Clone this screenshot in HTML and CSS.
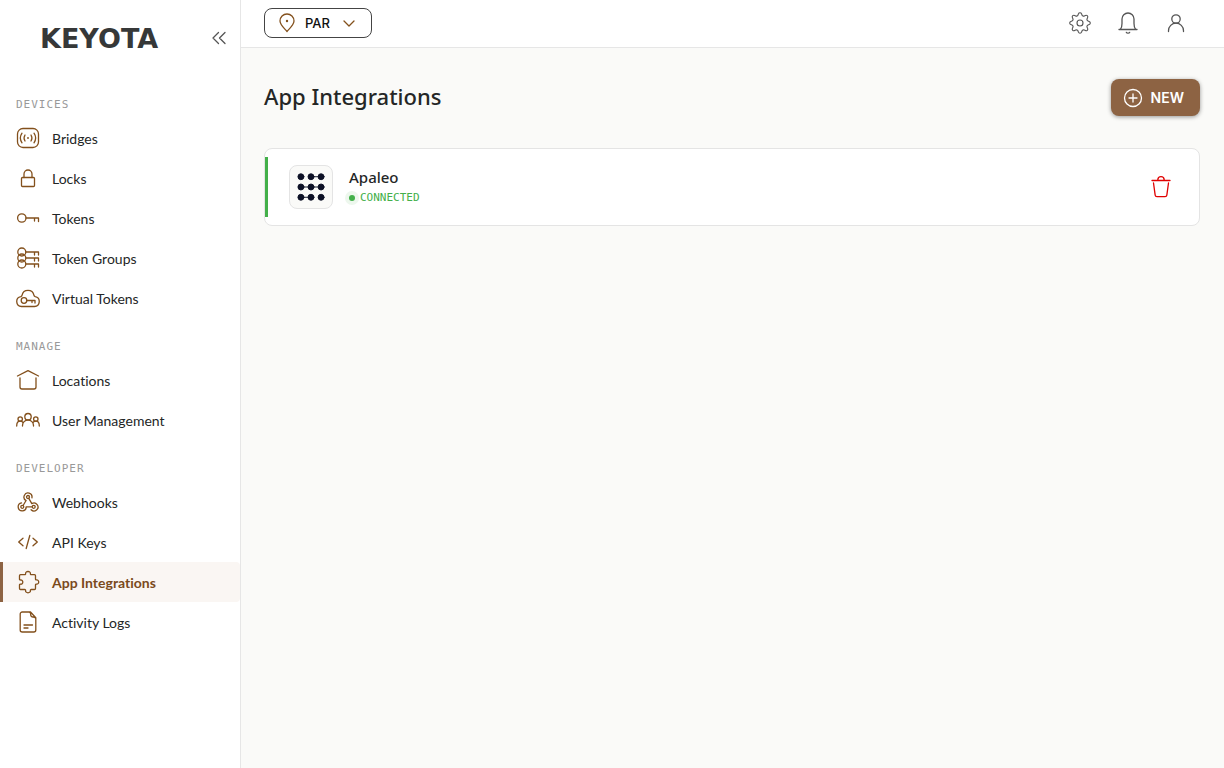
FILE: index.html
```html
<!DOCTYPE html>
<html lang="en">
<head>
  <meta charset="UTF-8">
  <meta name="viewport" content="width=device-width, initial-scale=1.0">
  <title>App Integrations - Keyota</title>
  <link rel="stylesheet" href="styles.css">
</head>
<body>
  <aside class="sidebar">
    <div class="sidebar-head">
      <a class="logo" href="#">KEYOTA</a>
      <button class="icon-btn collapse" aria-label="Collapse menu">
        <svg class="icon-sm" viewBox="0 0 16 16"><path d="M7.5 2.500 2 8l5.500 5.500M14 2.500 8.500 8l5.500 5.500"/></svg>
      </button>
    </div>

    <nav>
      <h2 class="nav-label">DEVICES</h2>
      <a class="nav-item" href="#">
        <svg class="icon" viewBox="0 0 24 24"><rect x="1.500" y="2.500" width="21" height="19" rx="5.500"/><path d="M6 7.200c-2 2.900-2 6.700 0 9.600M9 9c-1.200 1.900-1.200 4.100 0 6M18 7.200c2 2.900 2 6.700 0 9.600M15 9c1.200 1.900 1.200 4.100 0 6"/><circle class="dot" cx="12" cy="12" r=".9"/></svg>
        Bridges
      </a>
      <a class="nav-item" href="#">
        <svg class="icon" viewBox="0 0 24 24"><rect x="5.500" y="11.500" width="13" height="9" rx="1"/><path d="M8 11.500V8a4 4 0 0 1 8 0v3.500"/></svg>
        Locks
      </a>
      <a class="nav-item" href="#">
        <svg class="icon" viewBox="0 0 24 24"><circle cx="5.800" cy="12" r="4.200"/><path d="M10 12h12.500v3.500M18.500 12v3"/></svg>
        Tokens
      </a>
      <a class="nav-item" href="#">
        <svg class="icon" viewBox="0 0 24 24"><circle cx="5.800" cy="6" r="4"/><circle cx="5.800" cy="12" r="4"/><circle cx="5.800" cy="18" r="4"/><path d="M10 6h12.500v3M18.500 6v3M10 12h12.500v3M18.500 12v3M10 18h12.500v3M18.500 18v3"/></svg>
        Token Groups
      </a>
      <a class="nav-item" href="#">
        <svg class="icon" viewBox="0 0 24 24"><path d="M5.500 20.500a5 5 0 0 1-.7-9.900c.7-.2 1.200-.7 1.300-1.400a6 6 0 0 1 11.800 0c.1.700.6 1.200 1.300 1.400a5 5 0 0 1-.7 9.900z"/><circle cx="8" cy="14.500" r="2.800"/><path d="M10.800 14.500h8.200v2.500M16 14.500v2"/></svg>
        Virtual Tokens
      </a>

      <h2 class="nav-label">MANAGE</h2>
      <a class="nav-item" href="#">
        <svg class="icon" viewBox="0 0 24 24"><path d="M1.500 8 12 2.700 22.500 8M4 10v9c0 1.200.8 2 2 2h12c1.200 0 2-.8 2-2v-9"/></svg>
        Locations
      </a>
      <a class="nav-item" href="#">
        <svg class="icon" viewBox="0 0 24 24"><circle cx="12" cy="8.700" r="3.200"/><path d="M6.500 18v-.5a5.500 5.500 0 0 1 11 0v.5"/><circle cx="4.200" cy="11" r="2.200"/><circle cx="19.800" cy="11" r="2.200"/><path d="M.7 18c0-2.800 1-4.800 3.500-4.800 1.100 0 2 .4 2.600 1M23.300 18c0-2.800-1-4.800-3.500-4.800-1.100 0-2 .4-2.600 1"/></svg>
        User Management
      </a>

      <h2 class="nav-label">DEVELOPER</h2>
      <a class="nav-item" href="#">
        <svg class="icon" viewBox="0 0 24 24"><circle cx="12" cy="7" r="1.500"/><circle cx="6.300" cy="16.800" r="1.500"/><circle cx="17.700" cy="16.800" r="1.500"/><path d="M15.900 7.800a4 4 0 1 0-5.800 2.700l-3 5M12.800 8.400l3 5.200a4 4 0 1 1-.7 6.200M16 16.800h-5.800a4 4 0 1 1-4.700-3.900"/></svg>
        Webhooks
      </a>
      <a class="nav-item" href="#">
        <svg class="icon" viewBox="0 0 24 24"><path d="M7 8.200 2.700 12 7 15.800M17 8.200l4.300 3.800-4.300 3.800M13.800 5.500l-3.600 13"/></svg>
        API Keys
      </a>
      <a class="nav-item active" href="#" aria-current="page">
        <svg class="icon" viewBox="0 0 24 24"><path d="M4.500 4.700h4.200c.7 0 1-.5.900-1.100C9.400 2.500 10.400 1.500 12 1.500s2.600 1 2.400 2.100c-.1.600.2 1.100.9 1.100h3.200c.6 0 1 .4 1 1v3.200c0 .7.400 1.100 1 1 1.200-.2 2.200.7 2.200 2.100s-1 2.300-2.200 2.100c-.6-.1-1 .3-1 1v3.400c0 .6-.4 1-1 1h-3.200c-.7 0-1 .5-.9 1.100.2 1.200-.8 2.200-2.400 2.200s-2.600-1-2.400-2.200c.1-.6-.2-1.100-.9-1.100H4.500c-.6 0-1-.4-1-1v-3.600c0-.6.4-.8 1-.7 1.300.2 2.300-.8 2.300-2.100s-1-2.300-2.300-2.100c-.6.100-1-.2-1-.8V5.700c0-.6.400-1 1-1z"/></svg>
        App Integrations
      </a>
      <a class="nav-item" href="#">
        <svg class="icon" viewBox="0 0 24 24"><path d="M6 2h8.500l5.300 5.800V20a2 2 0 0 1-2 2H6.200a2 2 0 0 1-2-2V4a2 2 0 0 1 2-2zM13.300 2.200c1.300.4 1.400 1.300 1.400 2.300 0 1.800.8 2.500 2.300 2.500 1.300 0 2.400.3 2.800 1.500M8 15h8.500M8 18h4"/></svg>
        Activity Logs
      </a>
    </nav>
  </aside>

  <div class="page">
    <header class="topbar">
      <div class="location">
        <svg class="icon pin" viewBox="0 0 24 24"><path d="M12 20.500C9.500 17.600 5 13.700 5 10a7 7 0 0 1 14 0c0 3.700-4.500 7.600-7 10.500z"/><circle class="dot" cx="12" cy="10" r="1.200"/></svg>
        <select class="location-select" aria-label="Location">
          <option>PAR</option>
        </select>
        <svg class="icon-sm chevron" viewBox="0 0 16 16"><path d="m3 6 5 5 5-5"/></svg>
      </div>
      <div class="topbar-actions">
        <button class="icon-btn" aria-label="Settings">
          <svg class="icon" viewBox="-2 -2 28 28"><g transform="rotate(22.5 12 12)"><path d="M10.546 2.438a1.957 1.957 0 0 0 2.908 0L14.400 1.400a1.959 1.959 0 0 1 3.410 1.413l-.071 1.400a1.958 1.958 0 0 0 2.051 2.053l1.400-.071A1.959 1.959 0 0 1 22.600 9.600l-1.040.942a1.959 1.959 0 0 0 0 2.909l1.040.942a1.959 1.959 0 0 1-1.413 3.410l-1.400-.071a1.958 1.958 0 0 0-2.056 2.056l.071 1.400A1.959 1.959 0 0 1 14.400 22.600l-.941-1.041a1.959 1.959 0 0 0-2.908 0L9.606 22.600A1.959 1.959 0 0 1 6.200 21.192l.072-1.400a1.958 1.958 0 0 0-2.056-2.056l-1.400.071A1.958 1.958 0 0 1 1.400 14.400l1.041-.942a1.959 1.959 0 0 0 0-2.909L1.400 9.600A1.958 1.958 0 0 1 2.812 6.200l1.400.071a1.958 1.958 0 0 0 2.055-2.060l-.072-1.400A1.959 1.959 0 0 1 9.606 1.400z"/></g><circle cx="12" cy="12" r="3.500"/></svg>
        </button>
        <button class="icon-btn" aria-label="Notifications">
          <svg class="icon" viewBox="0 0 24 24"><path d="M3 18.500h18M4.300 18.500c1.400-1.500 1.700-3.500 1.700-6V8a6 6 0 0 1 12 0v4.500c0 2.500.3 4.500 1.700 6M10.300 21.300c.5 1.200 2.900 1.200 3.400 0"/></svg>
        </button>
        <button class="icon-btn" aria-label="Account">
          <svg class="icon" viewBox="0 0 24 24"><circle cx="12" cy="8" r="4.200"/><path d="M4.500 20.500v-.8a7.500 7.500 0 0 1 15 0v.8"/></svg>
        </button>
      </div>
    </header>

    <main class="content">
      <div class="title-row">
        <h1>App Integrations</h1>
        <button class="new-btn">
          <svg class="icon" viewBox="0 0 24 24"><circle cx="12" cy="12" r="8.500"/><path d="M12 8v8M8 12h8"/></svg>
          NEW
        </button>
      </div>

      <div class="card">
        <div class="app-logo">
          <svg class="apaleo" viewBox="0 0 30 30">
            <path d="M15 4h10.800M4.200 15h21.600M4.200 26H15"/>
            <circle cx="4.200" cy="4" r="3.200"/><circle cx="15" cy="4" r="3.200"/><circle cx="25.800" cy="4" r="3.200"/>
            <circle cx="4.200" cy="15" r="3.200"/><circle cx="15" cy="15" r="3.200"/><circle cx="25.800" cy="15" r="3.200"/>
            <circle cx="4.200" cy="26" r="3.200"/><circle cx="15" cy="26" r="3.200"/><circle cx="25.800" cy="26" r="3.200"/>
          </svg>
        </div>
        <div class="app-info">
          <h3>Apaleo</h3>
          <div class="status">CONNECTED</div>
        </div>
        <button class="icon-btn delete" aria-label="Delete integration">
          <svg class="icon" viewBox="0 0 24 24"><path d="M3 5.500h18M8.800 5.500v-.8A3.200 3.200 0 0 1 12 1.700a3.200 3.200 0 0 1 3.200 3v.8M4.500 8l1.700 12.300c.1.900.8 1.400 1.700 1.400h8.200c.9 0 1.600-.5 1.700-1.400L19.500 8"/></svg>
        </button>
      </div>
    </main>
  </div>
</body>
</html>
```
FILE: styles.css
```css
* {
  box-sizing: border-box;
}
body {
  margin: 0;
  min-height: 100vh;
  display: flex;
  background: #fafaf8;
  color: #242626;
  font-family: Lato, sans-serif;
  font-size: 14px;
  font-variant-ligatures: none;
}
h1, h2, h3 {
  margin: 0;
}
button {
  font-family: inherit;
  cursor: pointer;
}
svg {
  display: block;
  flex: none;
  fill: none;
  stroke: currentColor;
  stroke-width: 1.3;
  stroke-linecap: round;
  stroke-linejoin: round;
}
.icon {
  width: 24px;
  height: 24px;
}
.icon-sm {
  width: 16px;
  height: 16px;
}
.dot {
  fill: currentColor;
  stroke: none;
}
.icon-btn {
  padding: 0;
  border: none;
  background: none;
  color: #555;
}

/* Sidebar */
.sidebar {
  flex: 0 0 241px;
  background: white;
  border-right: 1px solid #e6e6e6;
}
.sidebar-head {
  display: flex;
  align-items: center;
  justify-content: space-between;
  height: 76px;
  padding: 0 13px 0 40px;
}
.logo {
  color: #363838;
  font-family: "DejaVu Sans", sans-serif;
  font-size: 27px;
  font-weight: bold;
  text-decoration: none;
}
.nav-label {
  margin: 20px 16px 4px;
  color: #999;
  font-family: "DejaVu Sans Mono", monospace;
  font-size: 11px;
  font-weight: normal;
  line-height: 18px;
  letter-spacing: 1px;
}
.nav-item {
  display: flex;
  align-items: center;
  gap: 12px;
  height: 40px;
  padding-left: 16px;
  color: #242626;
  text-decoration: none;
}
.nav-item .icon {
  color: #83501c;
}
.nav-item.active {
  padding-left: 13px;
  border-left: 3px solid #8d6343;
  border-radius: 0 4px 4px 0;
  background: #faf6f3;
  color: #7a4a1c;
  font-weight: bold;
}

/* Top bar */
.page {
  flex: 1;
  min-width: 0;
}
.topbar {
  display: flex;
  align-items: center;
  justify-content: space-between;
  height: 48px;
  padding: 0 36px 1px 23px;
  background: white;
  border-bottom: 1px solid #e6e6e6;
}
.location {
  display: grid;
  align-items: center;
}
.location > * {
  grid-area: 1 / 1;
}
.location svg {
  z-index: 1;
  color: #83501c;
  pointer-events: none;
}
.pin {
  margin-left: 11px;
}
.chevron {
  justify-self: end;
  margin-right: 15px;
}
.location-select {
  appearance: none;
  width: 108px;
  height: 30px;
  padding: 0 0 0 40px;
  border: 1px solid #444;
  border-radius: 8px;
  background: white;
  color: #111;
  font-family: Inter, sans-serif;
  font-size: 13px;
  font-weight: 500;
}
.topbar-actions {
  display: flex;
  gap: 24px;
}

/* Content */
.content {
  padding: 31px 24px 24px 23px;
}
.title-row {
  display: flex;
  align-items: flex-start;
  justify-content: space-between;
  margin-bottom: 32px;
}
h1 {
  font-family: "Noto Sans", sans-serif;
  font-size: 22px;
  font-weight: 500;
  line-height: 34px;
}
.new-btn {
  display: flex;
  align-items: center;
  gap: 6px;
  height: 37px;
  padding: 0 16px 0 10px;
  border: none;
  border-radius: 8px;
  background: #8d6343;
  box-shadow: 0 1px 4px rgba(0, 0, 0, 0.4);
  color: white;
  font-family: Inter, sans-serif;
  font-size: 14px;
  font-weight: 600;
}
.card {
  display: flex;
  align-items: center;
  gap: 16px;
  position: relative;
  height: 78px;
  padding: 0 26px 0 24px;
  background: white;
  border: 1px solid #e4e4e4;
  border-radius: 8px;
}
.card::before {
  content: "";
  position: absolute;
  left: 0;
  top: 8px;
  bottom: 8px;
  width: 3px;
  background: #43b04a;
}
.app-logo {
  display: grid;
  place-items: center;
  width: 44px;
  height: 44px;
  border: 1px solid #e4e4e4;
  border-radius: 8px;
  background: #fafaf8;
}
.apaleo {
  width: 28px;
  height: 28px;
  fill: #0d1126;
  stroke: #0d1126;
  stroke-width: 1;
}
.app-info {
  flex: 1;
}
h3 {
  font-family: "Noto Sans", sans-serif;
  font-size: 15px;
  font-weight: 500;
  line-height: 22px;
}
.status {
  display: flex;
  align-items: center;
  gap: 5px;
  color: #43b04a;
  font-family: "DejaVu Sans Mono", monospace;
  font-size: 11px;
  line-height: 20px;
}
.status::before {
  content: "";
  width: 6px;
  height: 6px;
  border-radius: 50%;
  background: #43b04a;
  box-shadow: 0 0 0 4px #edf7ed;
}
.delete {
  color: #e00000;
}
```
